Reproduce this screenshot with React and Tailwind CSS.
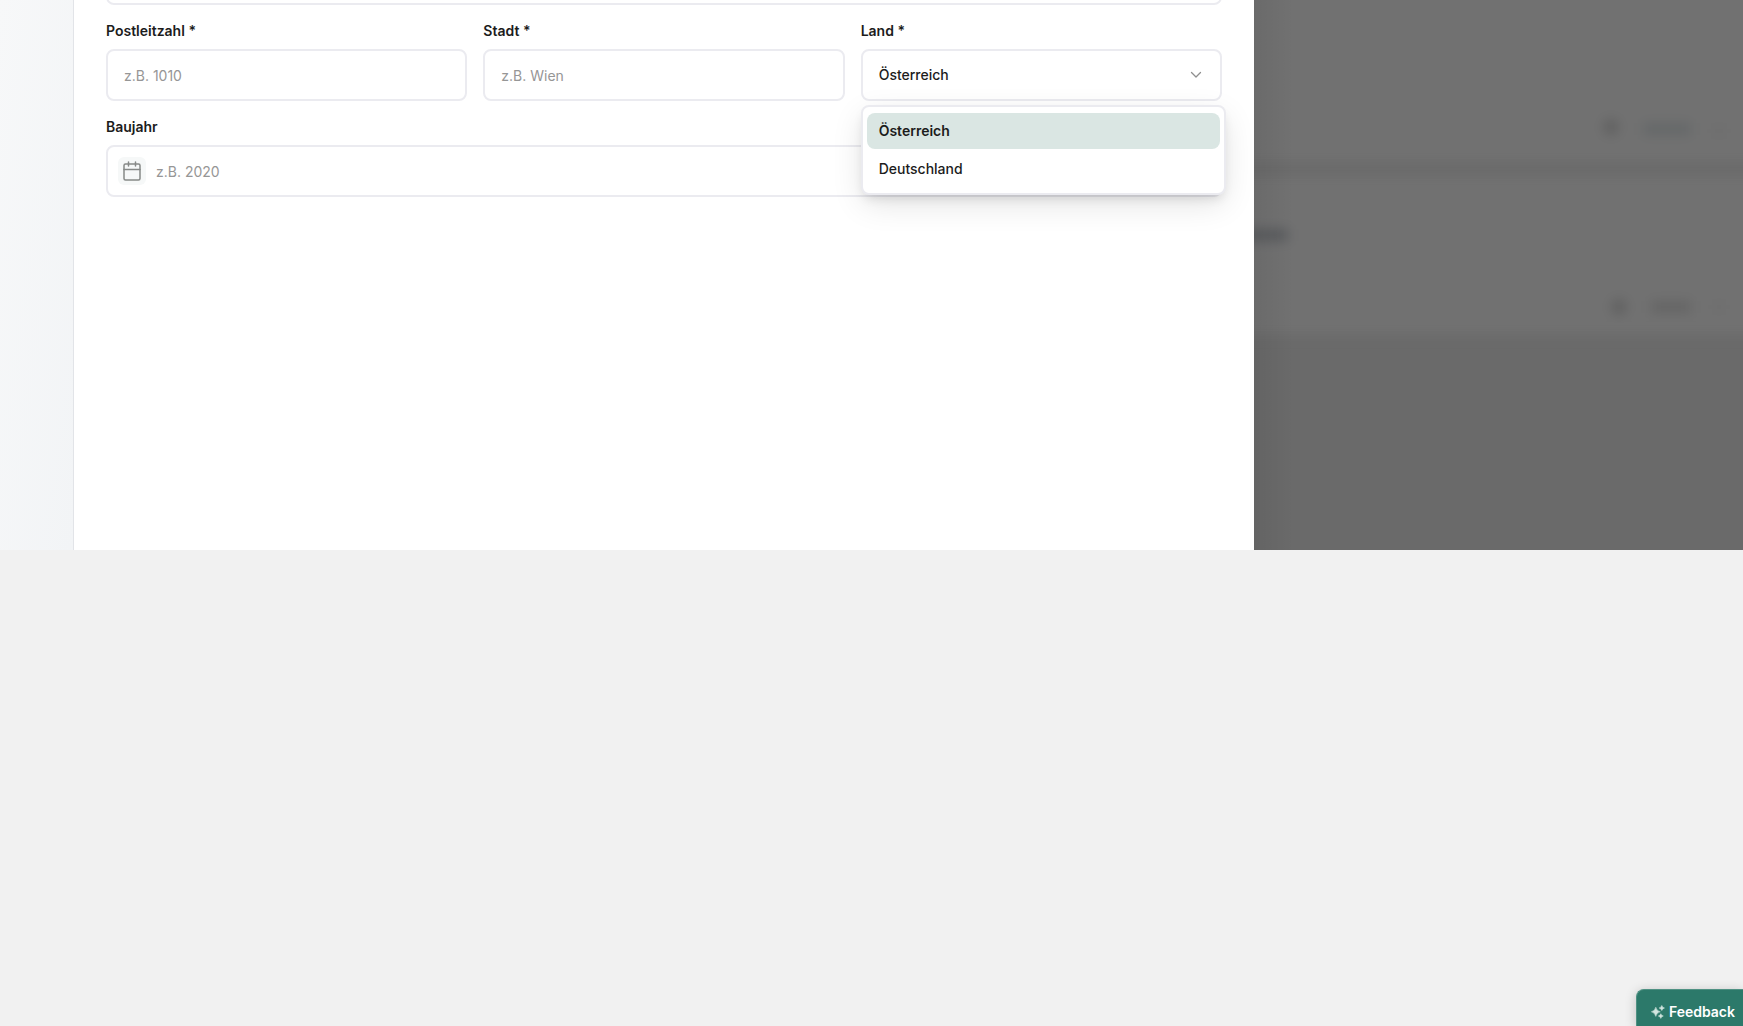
import { useState } from "react";

const LABEL = "text-sm leading-5 font-semibold text-[#1c1c1c]";
const FIELD =
  "h-[52px] w-full rounded-lg border-2 border-[#ebebf0] bg-white px-4 text-sm text-[#1c1c1c] placeholder:text-[#969696] outline-none";

function CalendarIcon() {
  return (
    <svg viewBox="0 0 20 20" className="size-5" fill="none" stroke="#868987" strokeWidth="1.5" strokeLinecap="round" aria-hidden="true">
      <rect x="2" y="3" width="16" height="16" rx="1.5" />
      <path d="M2 8.500h16M6.500 1v4M13.500 1v4" />
    </svg>
  );
}

function SparklesIcon() {
  return (
    <svg viewBox="0 0 14 14" className="size-[14px]" fill="#d2e5df" aria-hidden="true">
      <path d="M4.800 2.200Q5.700 6 9.300 6.800 5.700 7.600 4.800 11.400 3.900 7.600.3 6.800 3.900 6 4.800 2.200Z" stroke="#d2e5df" strokeWidth="0.5" strokeLinejoin="round" />
      <path d="M10.800.4Q11.300 2.500 13.500 3 11.300 3.500 10.800 5.600 10.300 3.500 8.100 3 10.300 2.500 10.800.4Z" stroke="#d2e5df" strokeWidth="0.5" strokeLinejoin="round" />
      <path d="M9.800 8.700Q10.300 10.600 12.300 11 10.300 11.400 9.800 13.400 9.300 11.400 7.300 11 9.300 10.600 9.800 8.700Z" stroke="#d2e5df" strokeWidth="0.5" strokeLinejoin="round" />
    </svg>
  );
}

function CountrySelect() {
  const countries = ["Österreich", "Deutschland"];
  const [country, setCountry] = useState("Österreich");
  return (
    <div className="flex flex-col gap-2">
      <label htmlFor="land" className={LABEL}>Land *</label>
      <div className="relative">
        <select
          id="land"
          value={country}
          onChange={(e) => setCountry(e.target.value)}
          className={`${FIELD} appearance-none font-medium`}
        >
          {countries.map((c) => (
            <option key={c}>{c}</option>
          ))}
        </select>
        <svg viewBox="0 0 12 12" className="pointer-events-none absolute top-5 right-5 size-3" fill="none" stroke="#8f8f8f" strokeWidth="1.3" strokeLinecap="round" strokeLinejoin="round" aria-hidden="true">
          <path d="M1.500 3.500 6 8l4.500-4.500" />
        </svg>
        <div
          role="listbox"
          aria-label="Land"
          className="absolute top-full left-0 z-10 mt-1 flex w-[calc(100%+4px)] flex-col gap-0.5 rounded-lg border-2 border-[#ebebf0] bg-white px-1 py-1.5 shadow-[0_10px_32px_-2px_rgba(0,0,0,0.12),0_6px_12px_-4px_rgba(0,0,0,0.14)]"
        >
          {countries.map((c) => (
            <button
              key={c}
              type="button"
              role="option"
              aria-selected={c === country}
              onClick={() => setCountry(c)}
              className={`h-9 rounded-lg px-3 text-left text-sm text-[#1c1c1c] ${c === country ? "bg-[#dae6e3] font-semibold" : "font-medium"}`}
            >
              {c}
            </button>
          ))}
        </div>
      </div>
    </div>
  );
}

function Backdrop() {
  return (
    <aside aria-hidden="true" className="relative w-[489px] shrink-0 overflow-hidden bg-[#6a6a6a]">
      <div className="-mx-6 flex flex-col gap-3 blur-[6px]">
        <div className="-mt-3 flex h-[175px] items-end justify-end gap-6 bg-[#717171] pr-11 pb-7">
          <span className="size-4 rounded-full bg-[#616161]" />
          <span className="h-3 w-12 bg-[#656869]" />
          <span className="size-2 bg-[#6b6b6b]" />
        </div>
        <div className="flex h-[160px] flex-col justify-between bg-[#717171] pt-[54px] pr-11 pb-5">
          <span className="h-3 w-[58px] bg-[#595b5e]" />
          <div className="flex items-center justify-end gap-6">
            <span className="size-4 rounded-full bg-[#616161]" />
            <span className="h-3 w-10 bg-[#656565]" />
            <span className="size-2 bg-[#6c6c6c]" />
          </div>
        </div>
      </div>
      <div className="absolute inset-y-0 left-0 w-10 bg-linear-to-r from-black/6 to-transparent" />
    </aside>
  );
}

export default function App() {
  return (
    <div className="flex h-screen flex-col overflow-hidden bg-[#f1f1f1] font-['Inter',sans-serif]">
      <div className="flex min-h-[550px] items-stretch">
        <div className="w-[74px] shrink-0 border-r border-[#e2e4e8] bg-linear-to-br from-[#f7f8f9] to-[#f2f4f6]" />
        <main className="min-w-0 flex-1 bg-white px-8">
          <form className="flex flex-col gap-4">
            <div className="flex h-[5px] items-end overflow-hidden">
              <input aria-label="Adresse" className={`${FIELD} shrink-0`} />
            </div>
            <div className="grid grid-cols-3 gap-4">
              <div className="flex flex-col gap-2">
                <label htmlFor="plz" className={LABEL}>Postleitzahl *</label>
                <input id="plz" placeholder="z.B. 1010" className={FIELD} />
              </div>
              <div className="flex flex-col gap-2">
                <label htmlFor="stadt" className={LABEL}>Stadt *</label>
                <input id="stadt" placeholder="z.B. Wien" className={FIELD} />
              </div>
              <CountrySelect />
            </div>
            <div className="flex flex-col gap-2">
              <label htmlFor="baujahr" className={LABEL}>Baujahr</label>
              <div className="flex h-[52px] items-center gap-2.5 rounded-lg border-2 border-[#ebebf0] px-2.5">
                <span className="flex size-7 items-center justify-center rounded-md bg-[#f6f8f8]">
                  <CalendarIcon />
                </span>
                <input id="baujahr" placeholder="z.B. 2020" className="h-full min-w-0 flex-1 text-sm text-[#1c1c1c] outline-none placeholder:text-[#969696]" />
              </div>
            </div>
          </form>
        </main>
        <Backdrop />
      </div>
      <footer className="mt-auto flex justify-end">
        <button type="button" className="flex h-[37px] items-center gap-1 rounded-tl-lg border-t border-l border-[#4f9183] bg-[#2c796a] pt-2 pr-2 pl-3.5 text-sm font-semibold text-white shadow-[0_2px_12px_rgba(0,0,0,0.2)]">
          <SparklesIcon />
          Feedback
        </button>
      </footer>
    </div>
  );
}
